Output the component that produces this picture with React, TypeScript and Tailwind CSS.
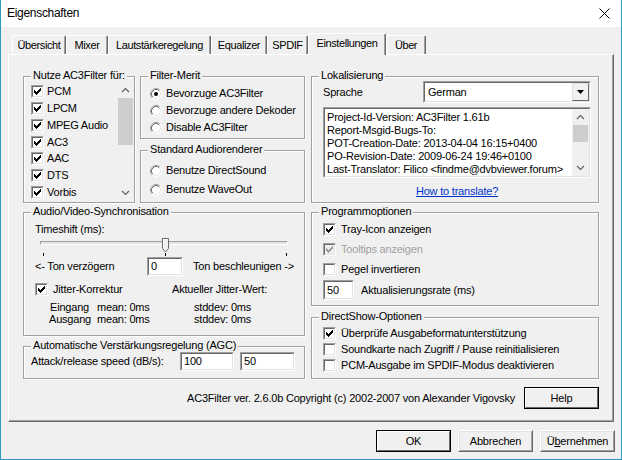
import React from "react";

const CHECK_PIXELS = ["......X", ".....XX", "X...XXX", "XX.XXX.", "XXXXX..", ".XXX...", "..X...."];

const sunkenOuter = "border border-t-[#a0a0a0] border-l-[#a0a0a0] border-r-white border-b-white";
const sunkenInner = "border border-t-[#696969] border-l-[#696969] border-r-[#e3e3e3] border-b-[#e3e3e3]";

function CheckMark({ color }: { color: string }) {
  return (
    <svg width="7" height="7" viewBox="0 0 7 7" shapeRendering="crispEdges">
      {CHECK_PIXELS.flatMap((row, y) =>
        row
          .split("")
          .map((c, x) => (c === "X" ? <rect key={`${x}-${y}`} x={x} y={y} width="1" height="1" fill={color} /> : null))
      )}
    </svg>
  );
}

function Check({ checked = true, disabled = false }: { checked?: boolean; disabled?: boolean }) {
  return (
    <span className={`flex h-[13px] w-[13px] shrink-0 ${sunkenOuter}`}>
      <span
        className={`flex flex-1 items-center justify-center ${sunkenInner} ${disabled ? "bg-[#f0f0f0]" : "bg-white"}`}
      >
        {checked && <CheckMark color={disabled ? "#a0a0a0" : "#000"} />}
      </span>
    </span>
  );
}

function Radio({ checked = false }: { checked?: boolean }) {
  return (
    <svg width="12" height="12" viewBox="0 0 12 12" className="shrink-0">
      <circle cx="6" cy="6" r="5.5" fill="#fff" />
      <path d="M2.11 9.89 A5.5 5.5 0 0 1 9.89 2.11" stroke="#a0a0a0" fill="none" />
      <path d="M9.89 2.11 A5.5 5.5 0 0 1 2.11 9.89" stroke="#fff" fill="none" />
      <path d="M2.82 9.18 A4.5 4.5 0 0 1 9.18 2.82" stroke="#696969" fill="none" />
      <path d="M9.18 2.82 A4.5 4.5 0 0 1 2.82 9.18" stroke="#e3e3e3" fill="none" />
      {checked && <circle cx="6" cy="6" r="2" fill="#000" />}
    </svg>
  );
}

function Field({ value, className }: { value: string; className: string }) {
  return (
    <div className={`flex ${sunkenOuter} ${className}`}>
      <div className={`flex flex-1 items-center bg-white pl-[2px] ${sunkenInner}`}>{value}</div>
    </div>
  );
}

function Group({ title, className, children }: { title: string; className: string; children?: React.ReactNode }) {
  return (
    <div className={`relative border border-[#a0a0a0] shadow-[inset_1px_1px_0_#fff,1px_1px_0_#fff] ${className}`}>
      <span className="absolute -top-[8px] left-[7px] bg-[#f0f0f0] px-[2px] leading-[13px]">{title}</span>
      {children}
    </div>
  );
}

function Chevron({ up }: { up?: boolean }) {
  return (
    <svg width="9" height="6" viewBox="0 0 9 6">
      <path d={up ? "M1 5 L4.5 1.5 L8 5" : "M1 1 L4.5 4.5 L8 1"} stroke="#606060" strokeWidth="1.2" fill="none" />
    </svg>
  );
}

function ScrollBar({ thumb }: { thumb: React.ReactNode }) {
  return (
    <div className="flex w-[17px] shrink-0 flex-col bg-[#f0f0f0]">
      <div className="flex h-[16px] items-center justify-center">
        <Chevron up />
      </div>
      <div className="flex-1">{thumb}</div>
      <div className="flex h-[17px] items-center justify-center">
        <Chevron />
      </div>
    </div>
  );
}

function Button({ children, strong = false, className = "" }: { children: React.ReactNode; strong?: boolean; className?: string }) {
  return (
    <div
      className={`flex h-[22px] w-[75px] ${strong ? "border border-[#000]" : "border border-t-white border-l-white border-r-[#696969] border-b-[#696969]"} ${className}`}
    >
      <div
        className={`flex flex-1 items-center justify-center border ${strong ? "border-t-white border-l-white border-r-[#696969] border-b-[#696969]" : "border-t-[#e3e3e3] border-l-[#e3e3e3] border-r-[#a0a0a0] border-b-[#a0a0a0]"}`}
      >
        {children}
      </div>
    </div>
  );
}

const tabs = [
  { label: "Übersicht", w: "w-[54px]" },
  { label: "Mixer", w: "w-[42px]" },
  { label: "Lautstärkeregelung", w: "w-[103px]" },
  { label: "Equalizer", w: "w-[56px]" },
  { label: "SPDIF", w: "w-[41px]" },
  { label: "Einstellungen", w: "w-[78px]", active: true },
  { label: "Über", w: "w-[40px]" },
];

const formats = ["PCM", "LPCM", "MPEG Audio", "AC3", "AAC", "DTS", "Vorbis"];

export default function App() {
  return (
    <div className="flex h-[460px] w-[622px] flex-col border-x border-b border-[#2b9bc1] bg-[#f0f0f0] font-['Liberation_Sans',Arial,sans-serif] text-[11px] leading-[13px] tracking-[-0.2px] text-black">
      {/* title bar */}
      <div className="flex h-[27px] items-center justify-between bg-white pl-[6px] pr-[11px]">
        <span className="text-[12px] tracking-[-0.3px]">Eigenschaften</span>
        <svg width="11" height="11" viewBox="0 0 11 11">
          <path d="M0.5 0.5 L10.5 10.5 M10.5 0.5 L0.5 10.5" stroke="#000" strokeWidth="1" />
        </svg>
      </div>

      {/* tabs */}
      <div className="mt-[6px] flex h-[21px] items-end pl-[11px] tracking-[-0.4px]">
        {tabs.map((t) =>
          t.active ? (
            <div
              key={t.label}
              className={`relative z-10 -mb-[1px] flex h-[22px] ${t.w} items-start justify-center rounded-t-[2px] border-x border-t border-l-white border-t-white border-r-[#696969] bg-[#f0f0f0] pt-[3px] shadow-[inset_-1px_0_0_#a0a0a0]`}
            >
              {t.label}
            </div>
          ) : (
            <div
              key={t.label}
              className={`flex h-[19px] ${t.w} items-start justify-center rounded-t-[2px] border-x border-t border-l-white border-t-white border-r-[#696969] pt-[3px] shadow-[inset_-1px_0_0_#a0a0a0]`}
            >
              {t.label}
            </div>
          )
        )}
      </div>

      {/* panel */}
      <div className="ml-[7px] flex h-[368px] w-[606px] flex-col border border-t-white border-l-white border-r-[#696969] border-b-[#696969] pl-[14px] pt-[21px] shadow-[inset_-1px_-1px_0_#a0a0a0]">
        <div className="flex gap-[6px]">
          {/* left column */}
          <div className="flex w-[282px] flex-col">
            <div className="flex h-[127px] gap-[5px]">
              <Group title="Nutze AC3Filter für:" className="flex w-[112px] pb-[1px] pt-[5px]">
                <div className="flex flex-1 flex-col pl-[7px] pt-[1px]">
                  {formats.map((f) => (
                    <div key={f} className="flex h-[17px] items-center gap-[3px]">
                      <Check />
                      <span>{f}</span>
                    </div>
                  ))}
                </div>
                <ScrollBar thumb={<div className="mx-[1px] h-[47px] bg-[#cdcdcd]" />} />
              </Group>
              <div className="flex w-[165px] flex-col">
                <Group title="Filter-Merit" className="h-[63px] pl-[9px] pt-[8px]">
                  {[
                    ["Bevorzuge AC3Filter", true],
                    ["Bevorzuge andere Dekoder", false],
                    ["Disable AC3Filter", false],
                  ].map(([label, on]) => (
                    <div key={label as string} className="flex h-[17px] items-center gap-[4px]">
                      <Radio checked={on as boolean} />
                      <span>{label}</span>
                    </div>
                  ))}
                </Group>
                <Group title="Standard Audiorenderer" className="mt-[11px] h-[53px] pl-[9px] pt-[10px]">
                  {["Benutze DirectSound", "Benutze WaveOut"].map((label) => (
                    <div key={label} className="flex h-[19px] items-center gap-[4px]">
                      <Radio />
                      <span>{label}</span>
                    </div>
                  ))}
                </Group>
              </div>
            </div>

            <Group title="Audio/Video-Synchronisation" className="mt-[9px] flex h-[124px] flex-col pl-[11px] pt-[10px]">
              <div className="h-[13px]">Timeshift (ms):</div>
              <div className="relative mt-[1px] h-[20px] w-[256px]">
                <div className="absolute left-[5px] top-[4px] h-[4px] w-[248px] border border-t-[#a0a0a0] border-l-[#a0a0a0] border-r-white border-b-white bg-[#e3e3e3]" />
                <svg className="absolute left-[127px] top-[1px]" width="7" height="15" viewBox="0 0 7 15">
                  <path d="M0.5 0.5 H6.5 V10.5 L3.5 14 L0.5 10.5 Z" fill="#f0f0f0" stroke="#696969" />
                  <path d="M1.5 10 V1.5 H5.5" stroke="#fff" fill="none" />
                </svg>
                <div className="absolute left-[8px] top-[16px] h-[3px] w-[1px] bg-black" />
                <div className="absolute left-[130px] top-[16px] h-[3px] w-[1px] bg-black" />
                <div className="absolute left-[251px] top-[16px] h-[3px] w-[1px] bg-black" />
              </div>
              <div className="flex h-[19px] items-center">
                <span className="w-[112px]">&lt;- Ton verzögern</span>
                <Field value="0" className="h-[19px] w-[36px]" />
                <span className="ml-[10px]">Ton beschleunigen -&gt;</span>
              </div>
              <div className="mt-[7px] flex h-[13px] items-center">
                <div className="flex w-[137px] items-center gap-[5px]">
                  <Check />
                  <span>Jitter-Korrektur</span>
                </div>
                <span>Aktueller Jitter-Wert:</span>
              </div>
              <div className="mt-[5px] flex h-[12px] items-center pl-[15px]">
                <span className="w-[47px]">Eingang</span>
                <span className="w-[97px]">mean: 0ms</span>
                <span>stddev: 0ms</span>
              </div>
              <div className="flex h-[12px] items-center pl-[14px]">
                <span className="w-[48px]">Ausgang</span>
                <span className="w-[97px]">mean: 0ms</span>
                <span>stddev: 0ms</span>
              </div>
            </Group>

            <Group title="Automatische Verstärkungsregelung (AGC)" className="mt-[10px] flex h-[33px] pl-[7px] pt-[5px]">
              <div className="flex h-[19px] items-center">
                <span className="w-[149px]">Attack/release speed (dB/s):</span>
                <Field value="100" className="h-[19px] w-[54px]" />
                <Field value="50" className="ml-[6px] h-[19px] w-[55px]" />
              </div>
            </Group>
          </div>

          {/* right column */}
          <div className="flex w-[288px] flex-col">
            <Group title="Lokalisierung" className="flex h-[127px] flex-col pl-[11px] pr-[7px] pt-[4px]">
              <div className="flex h-[22px] items-center">
                <span className="w-[100px]">Sprache</span>
                <div className={`flex h-[22px] flex-1 ${sunkenOuter}`}>
                  <div className={`flex flex-1 items-center bg-white pl-[3px] ${sunkenInner}`}>
                    <span className="flex-1">German</span>
                    <div className="flex h-full w-[17px] items-center justify-center border border-t-[#e3e3e3] border-l-[#e3e3e3] border-r-[#696969] border-b-[#696969] bg-[#f0f0f0]">
                      <svg width="7" height="4" viewBox="0 0 7 4">
                        <path d="M0 0 H7 L3.5 4 Z" fill="#000" />
                      </svg>
                    </div>
                  </div>
                </div>
              </div>
              <div className={`mt-[4px] flex h-[71px] ${sunkenOuter}`}>
                <div className={`flex flex-1 bg-white ${sunkenInner}`}>
                  <div className="flex-1 overflow-hidden whitespace-nowrap pl-[2px] pt-[2px]">
                    <div>Project-Id-Version: AC3Filter 1.61b</div>
                    <div>Report-Msgid-Bugs-To:</div>
                    <div>POT-Creation-Date: 2013-04-04 16:15+0400</div>
                    <div>PO-Revision-Date: 2009-06-24 19:46+0100</div>
                    <div>Last-Translator: Filico &lt;findme@dvbviewer.forum&gt;</div>
                  </div>
                  <ScrollBar thumb={<div className="mx-[1px] h-[17px] bg-[#cdcdcd]" />} />
                </div>
              </div>
              <div className="mt-[7px] text-center text-[#0033cc] underline">How to translate?</div>
            </Group>

            <Group title="Programmoptionen" className="mt-[9px] flex h-[94px] flex-col pl-[11px] pt-[6px]">
              <div className="flex h-[20px] items-center gap-[5px]">
                <Check />
                <span>Tray-Icon anzeigen</span>
              </div>
              <div className="flex h-[20px] items-center gap-[5px] text-[#a0a0a0]">
                <Check disabled />
                <span>Tooltips anzeigen</span>
              </div>
              <div className="flex h-[20px] items-center gap-[5px]">
                <Check checked={false} />
                <span>Pegel invertieren</span>
              </div>
              <div className="mt-[1px] flex h-[20px] items-center gap-[7px]">
                <Field value="50" className="h-[20px] w-[31px]" />
                <span>Aktualisierungsrate (ms)</span>
              </div>
            </Group>

            <Group title="DirectShow-Optionen" className="mt-[11px] h-[62px] pl-[11px] pt-[7px]">
              {[
                ["Überprüfe Ausgabeformatunterstützung", true],
                ["Soundkarte nach Zugriff / Pause reinitialisieren", false],
                ["PCM-Ausgabe im SPDIF-Modus deaktivieren", false],
              ].map(([label, on]) => (
                <div key={label as string} className="flex h-[16px] items-center gap-[5px]">
                  <Check checked={on as boolean} />
                  <span>{label}</span>
                </div>
              ))}
            </Group>
          </div>
        </div>

        <div className="mt-[8px] flex w-[576px] items-center justify-end gap-[9px]">
          <span>AC3Filter ver. 2.6.0b Copyright (c) 2002-2007 von Alexander Vigovsky</span>
          <Button strong>Help</Button>
        </div>
      </div>

      {/* dialog buttons */}
      <div className="mt-[8px] flex justify-end gap-[7px] pr-[6px]">
        <Button strong>OK</Button>
        <Button>Abbrechen</Button>
        <Button>
          <span>
            Ü<span className="underline">b</span>ernehmen
          </span>
        </Button>
      </div>
    </div>
  );
}
